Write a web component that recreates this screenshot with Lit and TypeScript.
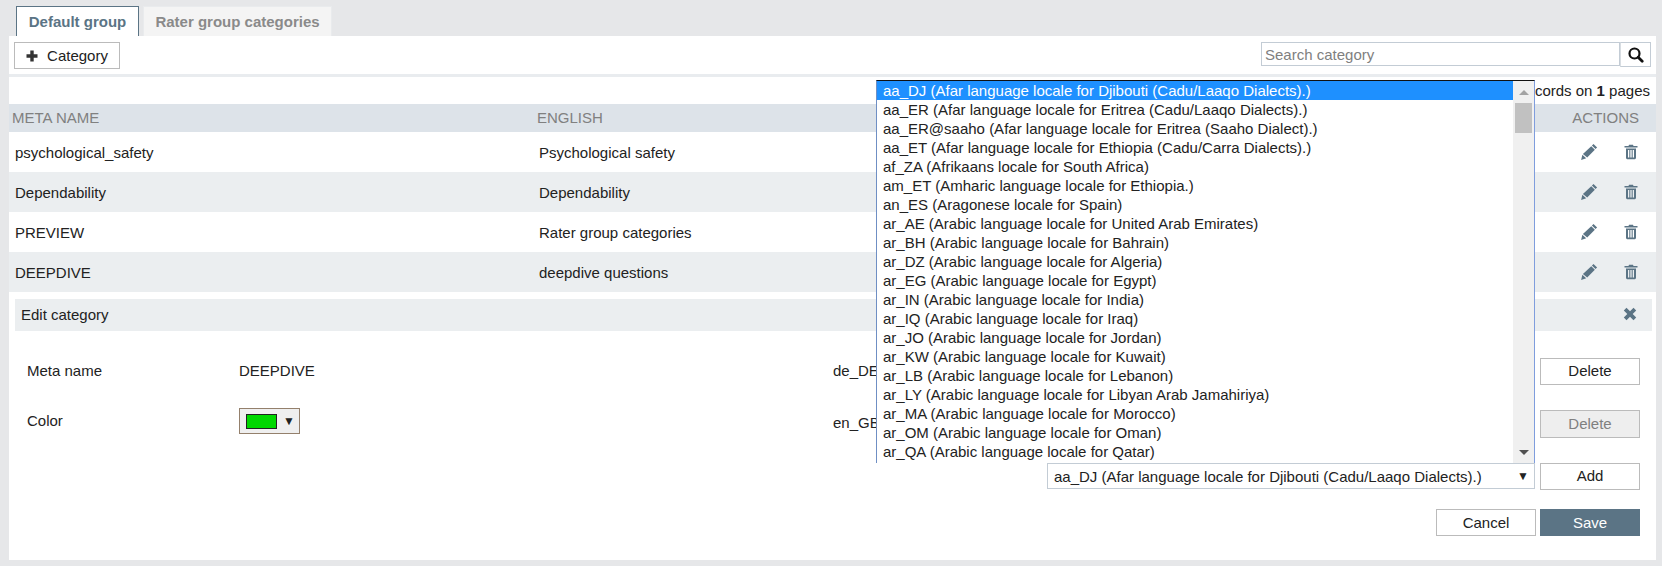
import { LitElement, html, css } from "lit";
import { customElement } from "lit/decorators.js";

const LOCALES = [
  "aa_DJ (Afar language locale for Djibouti (Cadu/Laaqo Dialects).)",
  "aa_ER (Afar language locale for Eritrea (Cadu/Laaqo Dialects).)",
  "aa_ER@saaho (Afar language locale for Eritrea (Saaho Dialect).)",
  "aa_ET (Afar language locale for Ethiopia (Cadu/Carra Dialects).)",
  "af_ZA (Afrikaans locale for South Africa)",
  "am_ET (Amharic language locale for Ethiopia.)",
  "an_ES (Aragonese locale for Spain)",
  "ar_AE (Arabic language locale for United Arab Emirates)",
  "ar_BH (Arabic language locale for Bahrain)",
  "ar_DZ (Arabic language locale for Algeria)",
  "ar_EG (Arabic language locale for Egypt)",
  "ar_IN (Arabic language locale for India)",
  "ar_IQ (Arabic language locale for Iraq)",
  "ar_JO (Arabic language locale for Jordan)",
  "ar_KW (Arabic language locale for Kuwait)",
  "ar_LB (Arabic language locale for Lebanon)",
  "ar_LY (Arabic language locale for Libyan Arab Jamahiriya)",
  "ar_MA (Arabic language locale for Morocco)",
  "ar_OM (Arabic language locale for Oman)",
  "ar_QA (Arabic language locale for Qatar)",
];

const ROWS = [
  ["psychological_safety", "Psychological safety"],
  ["Dependability", "Dependability"],
  ["PREVIEW", "Rater group categories"],
  ["DEEPDIVE", "deepdive questions"],
];

const pencil = html`<svg class="ic" width="18" height="18" viewBox="0 0 16 16"><path fill="currentColor" d="M12 .8l3.200 3.200-1.400 1.400-3.200-3.200zM10 2.800l3.200 3.200L6.400 12.800 2.600 9.800zM2.100 10.500l3.400 3.100-4.500 1.400z"/></svg>`;
const trash = html`<svg class="ic" width="14" height="16" viewBox="0 0 14 16"><path fill="currentColor" fill-rule="evenodd" d="M5 .8h4l.5 1.200H13.500v1.500H.5V2H4.500zM2 4.500h10V14.200l-1 1H3l-1-1zM4 6v7.500h1.300V6zM6.350 6v7.500h1.300V6zM8.700 6v7.500H10V6z"/></svg>`;
const cross = html`<svg class="ic" width="14" height="14" viewBox="0 0 14 14"><path fill="currentColor" d="M3.500 .8L7 4.300 10.500 .8 13.200 3.500 9.700 7 13.200 10.500 10.500 13.200 7 9.700 3.500 13.200 .8 10.500 4.300 7 .8 3.500z"/></svg>`;
const plus = html`<svg class="ic" width="12" height="12" viewBox="0 0 12 12"><path fill="#333" d="M4.300 .5h3.400v3.800h3.800v3.400H7.700v3.800H4.300V7.700H.5V4.300h3.800z"/></svg>`;
const search = html`<svg width="16" height="16" viewBox="0 0 16 16"><circle cx="6.500" cy="6.500" r="5" fill="none" stroke="#111" stroke-width="2.200"/><path d="M10.200 10.200l4 4" stroke="#111" stroke-width="2.800" stroke-linecap="round"/></svg>`;

@customElement("app-root")
export class AppRoot extends LitElement {
  static styles = css`
    :host { display: block; width: 1662px; height: 566px; background: #e6e7e9; font: 15px/19px "Liberation Sans", Arial, sans-serif; color: #222; overflow: hidden; position: relative; }
    * { box-sizing: border-box; }
    .tabs { display: flex; gap: 4px; height: 36px; padding: 6px 0 0 16px; }
    .tab { height: 30px; display: flex; align-items: center; justify-content: center; font-weight: 700; border: 1px solid #e9ebed; border-bottom: 0; background: #f4f4f4; color: #8a8a8a; }
    .tab.active { width: 123px; background: #fff; color: #5b7485; border-color: #5b7485; }
    .tab.other { width: 189px; }
    .panel { margin: 0 6px 0 9px; background: #fff; height: 524px; }
    .toolbar { height: 38px; padding: 6px 5px 0 5px; display: flex; justify-content: space-between; align-items: flex-start; }
    .btn { background: #fff; border: 1px solid #bbb; color: #222; font: inherit; display: flex; align-items: center; justify-content: center; padding: 0; }
    .btn-cat { width: 106px; height: 27px; gap: 9px; }
    .searchbox { display: flex; }
    .searchbox .field { width: 359px; height: 24px; border: 1px solid #c3ccd5; padding-left: 3px; color: #808080; display: flex; align-items: center; }
    .searchbox .go { width: 31px; height: 25px; border: 1px solid #c3ccd5; border-left-color: #d8dde2; display: flex; align-items: center; justify-content: center; }
    .strip { height: 3px; background: #e9ecef; }
    .pager { height: 27px; display: flex; align-items: center; justify-content: flex-end; padding-right: 6px; }
    .thead, .tr { display: grid; align-items: center; }
    .thead { grid-template-columns: 528px 1fr 160px; height: 28px; padding-bottom: 2px; background: #dde3e9; color: #808080; }
    .thead > div:first-child { padding-left: 3px; }
    .thead .act { text-align: right; padding-right: 17px; }
    .tr { height: 40px; padding-left: 6px; grid-template-columns: 522px 1fr 160px; }
    .tr.alt { background: #ebeef0; }
    .tr .eng { padding-left: 2px; }
    .acts { display: flex; justify-content: flex-end; align-items: center; gap: 26px; padding-right: 18px; color: #5b7485; }
    .ic { display: block; }
    .edit { padding: 7px 4px 0 6px; }
    .edit-head { height: 32px; padding: 0 15px 2px 6px; background: #ebeef0; display: flex; align-items: center; justify-content: space-between; color: #222; }
    .edit-head .ic { color: #5b7485; }
    .form { margin-top: 27px; display: grid; grid-template-columns: 818px 1fr; }
    .left { padding-left: 12px; display: grid; grid-template-columns: 212px 1fr; grid-auto-rows: 50px; }
    .left .cell { height: 27px; padding-bottom: 2px; display: flex; align-items: center; }
    .right { display: flex; flex-direction: column; }
    .lrow { display: flex; height: 52px; align-items: flex-start; justify-content: space-between; padding-right: 12px; }
    .lrow.second { height: 53px; }
    .lrow span { line-height: 25px; }
    .lrow .btn, .addrow .btn { width: 100px; height: 27px; padding-bottom: 2px; }
    .foot .btn { width: 100px; height: 27px; }
    .btn.disabled { background: #eee; color: #808080; height: 28px; }
    .addrow { display: flex; justify-content: flex-end; gap: 5px; padding-right: 12px; height: 46px; }
    .sel { width: 488px; height: 26px; border: 1px solid #c3ccd5; display: flex; align-items: center; justify-content: space-between; padding: 0 5px 0 6px; }
    .caret { font-size: 12px; color: #222; }
    .foot { display: flex; justify-content: flex-end; gap: 4px; padding-right: 12px; }
    .btn.save { background: #5b7485; border-color: #5b7485; color: #fff; }
    .swatch { width: 61px; height: 26px; border: 1px solid #94806c; background: #efefef; display: flex; align-items: center; gap: 6px; padding-left: 6px; }
    .swatch i { display: block; width: 31px; height: 15px; background: #00d800; border: 1px solid #222; }
    .list { position: absolute; left: 876px; top: 80px; width: 659px; height: 383px; background: #fff; border: 1px solid #7f9db9; border-top: 1px solid #111; border-left-color: #6f8fc4; border-right-color: #7f9ddd; border-bottom: 0; display: flex; overflow: hidden; }
    .items { flex: 1; overflow: hidden; color: #222; }
    .item { height: 19px; line-height: 19px; padding-left: 6px; white-space: nowrap; }
    .item.sel-item { background: #1e90ff; color: #fff; }
    .sb { width: 21px; background: #f0f0f0; position: relative; display: flex; flex-direction: column; align-items: center; justify-content: space-between; padding: 9px 0 8px; }
    .sb .up { width: 0; height: 0; border: 5px solid transparent; border-top: 0; border-bottom: 5px solid #a3a3a3; }
    .sb .down { width: 0; height: 0; border: 5px solid transparent; border-bottom: 0; border-top: 5px solid #505050; }
    .thumb { position: absolute; left: 2px; top: 22px; width: 17px; height: 30px; background: #c1c1c1; }
  `;

  render() {
    return html`
      <div class="tabs">
        <div class="tab active">Default group</div>
        <div class="tab other">Rater group categories</div>
      </div>
      <div class="panel">
        <div class="toolbar">
          <div class="btn btn-cat">${plus}<span>Category</span></div>
          <div class="searchbox">
            <div class="field">Search category</div>
            <div class="go">${search}</div>
          </div>
        </div>
        <div class="strip"></div>
        <div class="pager"><span>4 records on <b>1</b> pages</span></div>
        <div class="thead"><div>META NAME</div><div>ENGLISH</div><div class="act">ACTIONS</div></div>
        ${ROWS.map(
          (r, i) => html`<div class="tr ${i % 2 ? "alt" : ""}">
            <div>${r[0]}</div><div class="eng">${r[1]}</div>
            <div class="acts">${pencil}${trash}</div>
          </div>`
        )}
        <div class="edit">
          <div class="edit-head"><span>Edit category</span>${cross}</div>
          <div class="form">
            <div class="left">
              <div class="cell">Meta name</div><div class="cell">DEEPDIVE</div>
              <div class="cell">Color</div>
              <div><div class="swatch"><i></i><span class="caret">▼</span></div></div>
            </div>
            <div class="right">
              <div class="lrow"><span>de_DE</span><div class="btn">Delete</div></div>
              <div class="lrow second"><span>en_GB</span><div class="btn disabled">Delete</div></div>
              <div class="addrow">
                <div class="sel"><span>${LOCALES[0]}</span><span class="caret">▼</span></div>
                <div class="btn">Add</div>
              </div>
              <div class="foot"><div class="btn">Cancel</div><div class="btn save">Save</div></div>
            </div>
          </div>
        </div>
      </div>
      <div class="list">
        <div class="items">
          ${LOCALES.map((l, i) => html`<div class="item ${i === 0 ? "sel-item" : ""}">${l}</div>`)}
        </div>
        <div class="sb"><div class="up"></div><div class="thumb"></div><div class="down"></div></div>
      </div>
    `;
  }
}
